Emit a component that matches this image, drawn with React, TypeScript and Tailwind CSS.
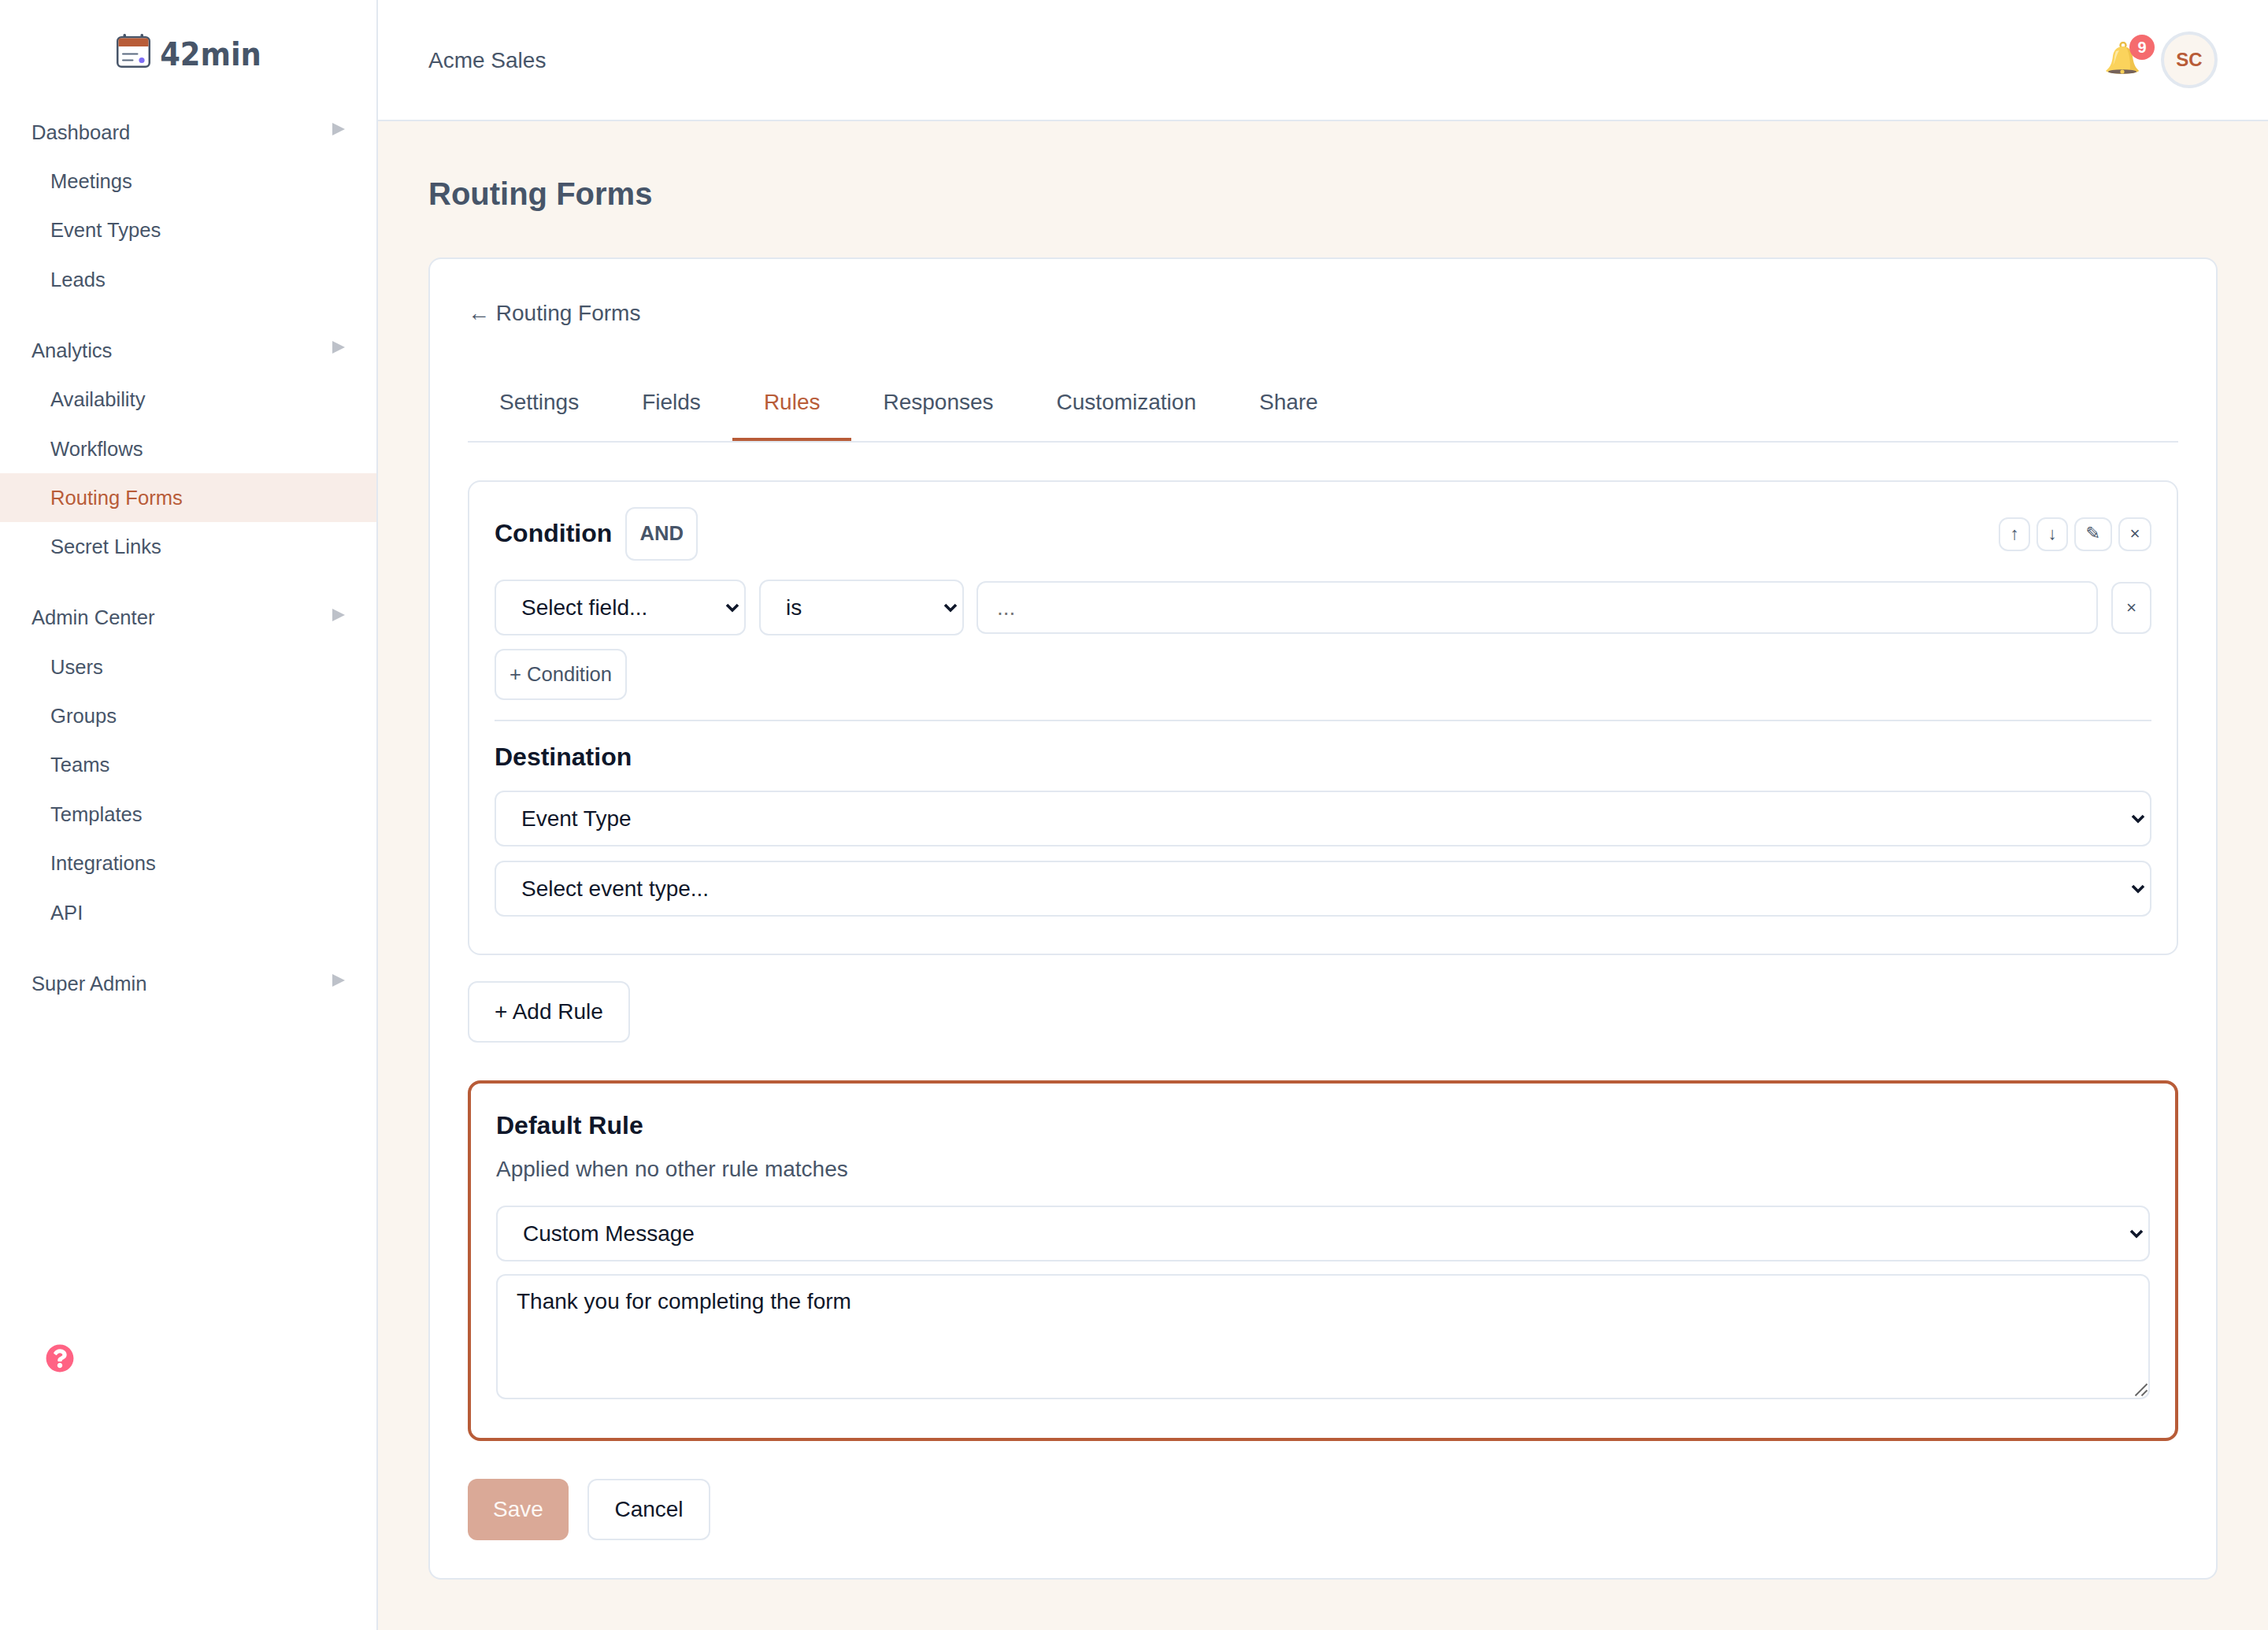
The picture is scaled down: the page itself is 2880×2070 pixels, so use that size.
import { FaQuestionCircle } from 'react-icons/fa';

const navGroups = [
  { title: 'Dashboard', items: ['Meetings', 'Event Types', 'Leads'] },
  { title: 'Analytics', items: ['Availability', 'Workflows', 'Routing Forms', 'Secret Links'] },
  { title: 'Admin Center', items: ['Users', 'Groups', 'Teams', 'Templates', 'Integrations', 'API'] },
  { title: 'Super Admin', items: [] as string[] },
];

const tabs = ['Settings', 'Fields', 'Rules', 'Responses', 'Customization', 'Share'];

function Logo() {
  return (
    <svg width="43" height="43" viewBox="0 0 43 43" fill="none" className="shrink-0">
      <rect x="8.5" y="0" width="3.5" height="7" rx="1.5" fill="#475569" />
      <rect x="30.5" y="0" width="3.5" height="7" rx="1.5" fill="#475569" />
      <rect x="1.25" y="4.25" width="40.5" height="37.5" rx="5" fill="#fff" stroke="#475569" strokeWidth="2.5" />
      <path d="M2.5 16V8.5a3 3 0 0 1 3-3h32a3 3 0 0 1 3 3V16z" fill="#b85c38" />
      <path d="M8 25.5h18.5M8 33.5h12.5" stroke="#5b6b80" strokeWidth="2" strokeLinecap="round" />
      <circle cx="32" cy="33.5" r="3.6" fill="#7f6df6" />
    </svg>
  );
}

function Bell() {
  return (
    <svg width="44" height="43" viewBox="0 0 44 43">
      <circle cx="23" cy="4.5" r="3.5" fill="none" stroke="#eabd45" strokeWidth="2.4" />
      <path d="M23 6c-8 0-12 5-13 12-1 9-3 14-9 19 6 5 36 5 42 0-6-5-8-10-9-19-1-7-5-12-11-12z" fill="#fbd35c" />
      <path d="M27 7c5 1 7 6 8 11 1 9 3 14 8 19-3 2-8 3-12 3 2-8 1-24-4-33z" fill="#f0c44b" />
      <path d="M14 12c-1 3-2 6-2 10-1 4-1 6-2 8 3-4 4-13 8-19z" fill="#fdeaa6" />
      <ellipse cx="22" cy="38" rx="18" ry="2.8" fill="#75625a" />
      <circle cx="22" cy="38" r="2.6" fill="#f6cf58" />
    </svg>
  );
}

function IconButton({ label, width }: { label: string; width: string }) {
  return (
    <button className={`flex h-[43px] items-center justify-center rounded-xl border-2 border-[#e2e8f0] bg-white text-[22.4px] text-[#475569] ${width}`}>
      {label}
    </button>
  );
}

function Select({ label, className }: { label: string; className: string }) {
  return (
    <div className={`relative ${className}`}>
      <select className="block h-[71px] w-full appearance-none rounded-xl border-2 border-[#e2e8f0] bg-white pt-[1px] pl-[32px] text-[28px] text-[#0f172a]">
        <option>{label}</option>
      </select>
      <svg width="18" height="12" viewBox="0 0 18 12" className="pointer-events-none absolute top-[30px] right-[8px]" fill="none">
        <path d="M2 2l7 7 7-7" stroke="#0f172a" strokeWidth="3.6" />
      </svg>
    </div>
  );
}

export default function App() {
  return (
    <div className="flex min-h-screen bg-[#faf5ef] font-['Liberation_Sans','DejaVu_Sans',sans-serif] text-[28px] text-[#475569]">
      <aside className="relative w-[480px] shrink-0 border-r-2 border-[#e2e8f0] bg-white">
        <div className="flex h-[136.6px] items-start justify-center gap-[12px] pt-[43px] pl-[2px]">
          <Logo />
          <span className="mt-[2px] font-['DejaVu_Sans_Condensed','DejaVu_Sans',sans-serif] text-[41px] leading-[48px] font-bold [font-stretch:condensed]">
            42min
          </span>
        </div>
        <nav className="flex flex-col gap-[27.6px]">
          {navGroups.map((group) => (
            <div key={group.title}>
              <div className="flex h-[62.4px] items-center justify-between pr-[40px] pl-[40px] text-[25.6px]">
                <span>{group.title}</span>
                <svg width="16" height="16" viewBox="0 0 16 16" className="-mt-[7px]">
                  <polygon points="0,0 16,8 0,16" fill="#bdc1c9" />
                </svg>
              </div>
              {group.items.map((item) => (
                <div
                  key={item}
                  className={
                    item === 'Routing Forms'
                      ? 'flex h-[62.4px] items-center bg-[#f8ede8] pl-[64px] text-[25.6px] text-[#b85c38]'
                      : 'flex h-[62.4px] items-center pl-[64px] text-[25.6px]'
                  }
                >
                  {item}
                </div>
              ))}
            </div>
          ))}
        </nav>
        <FaQuestionCircle className="absolute top-[1707px] left-[58px] text-[36px] text-[#ff6384]" />
      </aside>

      <div className="flex min-w-0 flex-1 flex-col">
        <header className="flex h-[154px] items-center justify-between border-b-2 border-[#e2e8f0] bg-white px-16">
          <span className="pt-[1px]">Acme Sales</span>
          <div className="flex items-center gap-[27px]">
            <div className="relative -mt-[3px]">
              <Bell />
              <span className="absolute -top-[9px] -right-[19px] flex h-8 w-8 items-center justify-center rounded-full bg-[#f56b6e] text-[20px] font-bold text-white">
                9
              </span>
            </div>
            <div className="flex h-[72px] w-[72px] items-center justify-center rounded-full border-4 border-[#e2e8f0] bg-[#faf5ef] text-[24px] font-bold text-[#b85c38]">
              SC
            </div>
          </div>
        </header>

        <main className="flex-1 px-16 pt-16 pb-16">
          <h1 className="mb-[53px] text-[40px] leading-[56px] font-bold">Routing Forms</h1>

          <div className="rounded-2xl border-2 border-[#e2e8f0] bg-white p-[48px]">
            <div className="h-[42px] leading-[42px]">← Routing Forms</div>

            <div className="mt-[47px] mb-[48px] flex border-b-2 border-[#e2e8f0]">
              {tabs.map((tab) => (
                <div
                  key={tab}
                  className={
                    tab === 'Rules'
                      ? 'border-b-4 border-[#b85c38] px-10 py-6 leading-[42px] text-[#b85c38]'
                      : 'border-b-4 border-transparent px-10 py-6 leading-[42px]'
                  }
                >
                  {tab}
                </div>
              ))}
            </div>

            <div className="mb-[33px] rounded-2xl border-2 border-[#e2e8f0] p-[32px]">
              <div className="flex items-center justify-between">
                <div className="flex items-center gap-[17px]">
                  <h3 className="-mt-[3px] text-[32px] font-bold text-[#0f172a]">Condition</h3>
                  <button className="h-[68px] w-[92px] rounded-xl border-2 border-[#e2e8f0] pb-[1px] text-[25.6px] font-bold">AND</button>
                </div>
                <div className="flex gap-2">
                  <IconButton label="↑" width="w-[40px]" />
                  <IconButton label="↓" width="w-[40px]" />
                  <IconButton label="✎" width="w-[48px]" />
                  <IconButton label="×" width="w-[42px]" />
                </div>
              </div>

              <div className="mt-[24px] flex items-center gap-[17px]">
                <Select label="Select field..." className="w-[319px]" />
                <Select label="is" className="w-[260px]" />
                <input
                  placeholder="..."
                  className="-ml-[1px] h-[67px] min-w-0 flex-1 rounded-xl border-2 border-[#e2e8f0] px-[24px] text-[28px] placeholder:text-[#757575]"
                />
                <button className="h-[66px] w-[51px] rounded-xl border-2 border-[#e2e8f0] text-[22.4px]">×</button>
              </div>

              <button className="mt-[17px] h-[65px] w-[168px] rounded-xl border-2 border-[#e2e8f0] text-[25.6px]">+ Condition</button>

              <div className="mt-[25px] border-t-2 border-[#e2e8f0] pt-[24px]">
                <h3 className="text-[32px] leading-[42px] font-bold text-[#0f172a]">Destination</h3>
                <Select label="Event Type" className="mt-[22px] w-full" />
                <Select label="Select event type..." className="mt-[18px] mb-[15px] w-full" />
              </div>
            </div>

            <button className="mb-[48px] h-[78px] w-[206px] rounded-xl border-2 border-[#e2e8f0] text-[#0f172a]">+ Add Rule</button>

            <div className="rounded-2xl border-4 border-[#b85c38] p-[32px] pb-[49px]">
              <h3 className="text-[32px] leading-[42px] font-bold text-[#0f172a]">Default Rule</h3>
              <p className="mt-[14px] leading-[42px]">Applied when no other rule matches</p>
              <Select label="Custom Message" className="mt-[25px] w-full" />
              <div className="relative mt-[16px]">
                <textarea
                  defaultValue="Thank you for completing the form"
                  className="block h-[159px] w-full resize-none rounded-xl border-2 border-[#e2e8f0] px-[24px] py-[12px] text-[28px] text-[#0f172a]"
                />
                <svg width="18" height="18" viewBox="0 0 18 18" className="pointer-events-none absolute right-[2px] bottom-[3px]" fill="none">
                  <path d="M1.5 16.5L16.5 1.5M9.5 16.5l7-7" stroke="#666" strokeWidth="1.8" />
                </svg>
              </div>
            </div>

            <div className="mt-[48px] flex gap-[24px]">
              <button className="h-[78px] w-[128px] rounded-xl bg-[#daa997] text-[#fdf8f5]">Save</button>
              <button className="h-[78px] w-[156px] rounded-xl border-2 border-[#e2e8f0] text-[#0f172a]">Cancel</button>
            </div>
          </div>
        </main>
      </div>
    </div>
  );
}
